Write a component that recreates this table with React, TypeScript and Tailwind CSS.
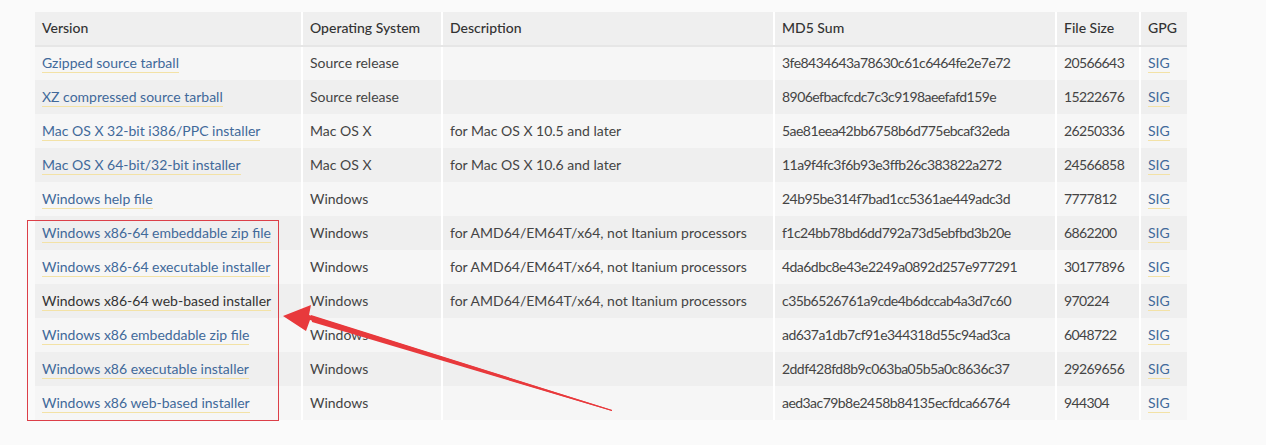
const rows = [
  { v: 'Gzipped source tarball', os: 'Source release', d: '', md5: '3fe8434643a78630c61c6464fe2e7e72', size: '20566643' },
  { v: 'XZ compressed source tarball', os: 'Source release', d: '', md5: '8906efbacfcdc7c3c9198aeefafd159e', size: '15222676' },
  { v: 'Mac OS X 32-bit i386/PPC installer', os: 'Mac OS X', d: 'for Mac OS X 10.5 and later', md5: '5ae81eea42bb6758b6d775ebcaf32eda', size: '26250336' },
  { v: 'Mac OS X 64-bit/32-bit installer', os: 'Mac OS X', d: 'for Mac OS X 10.6 and later', md5: '11a9f4fc3f6b93e3ffb26c383822a272', size: '24566858' },
  { v: 'Windows help file', os: 'Windows', d: '', md5: '24b95be314f7bad1cc5361ae449adc3d', size: '7777812' },
  { v: 'Windows x86-64 embeddable zip file', os: 'Windows', d: 'for AMD64/EM64T/x64, not Itanium processors', md5: 'f1c24bb78bd6dd792a73d5ebfbd3b20e', size: '6862200' },
  { v: 'Windows x86-64 executable installer', os: 'Windows', d: 'for AMD64/EM64T/x64, not Itanium processors', md5: '4da6dbc8e43e2249a0892d257e977291', size: '30177896' },
  { v: 'Windows x86-64 web-based installer', os: 'Windows', d: 'for AMD64/EM64T/x64, not Itanium processors', md5: 'c35b6526761a9cde4b6dccab4a3d7c60', size: '970224', visited: true },
  { v: 'Windows x86 embeddable zip file', os: 'Windows', d: '', md5: 'ad637a1db7cf91e344318d55c94ad3ca', size: '6048722' },
  { v: 'Windows x86 executable installer', os: 'Windows', d: '', md5: '2ddf428fd8b9c063ba05b5a0c8636c37', size: '29269656' },
  { v: 'Windows x86 web-based installer', os: 'Windows', d: '', md5: 'aed3ac79b8e2458b84135ecfdca66764', size: '944304' },
];

function Link({ children, dark }: { children: string; dark?: boolean }) {
  return (
    <a
      href="#"
      className={`border-b border-[#f3e2a6] pb-[1px] ${dark ? 'text-[#333]' : 'text-[#41699a]'}`}
    >
      {children}
    </a>
  );
}

export default function App() {
  const cell = 'h-[34px] px-[7px] pb-[2px] border-l-2 border-white first:border-l-0 whitespace-nowrap';
  return (
    <div className="relative w-[1266px] h-[445px] bg-[#fafafa] overflow-hidden font-['Lato',sans-serif] text-[14px] text-[#444]">
      <div className="pt-[12px] pl-[35px]">
        <table className="border-collapse table-fixed w-[1152px]">
          <colgroup>
            <col className="w-[267px]" />
            <col className="w-[140px]" />
            <col className="w-[332px]" />
            <col className="w-[282px]" />
            <col className="w-[84px]" />
            <col className="w-[47px]" />
          </colgroup>
          <thead>
            <tr className="bg-[#efefef] text-[#333] text-left">
              {['Version', 'Operating System', 'Description', 'MD5 Sum', 'File Size', 'GPG'].map((h) => (
                <th key={h} className={`${cell} h-[32px] border-b-2 border-b-[#e6e6e6] font-medium`}>{h}</th>
              ))}
            </tr>
          </thead>
          <tbody>
            {rows.map((r, i) => (
              <tr key={r.v} className={i % 2 === 0 ? 'bg-[#f6f6f6]' : 'bg-[#efefef]'}>
                <td className={cell}><Link dark={r.visited}>{r.v}</Link></td>
                <td className={cell}>{r.os}</td>
                <td className={cell}>{r.d}</td>
                <td className={`${cell} tracking-[-0.55px]`}>{r.md5}</td>
                <td className={`${cell} tracking-[-0.6px]`}>{r.size}</td>
                <td className={cell}><Link>SIG</Link></td>
              </tr>
            ))}
          </tbody>
        </table>
      </div>

      {/* annotation box */}
      <div className="absolute left-[27px] top-[220px] w-[252px] h-[201px] border border-[#dc3f48]" />

      {/* annotation arrow */}
      <svg className="absolute left-0 top-0" width="1266" height="445" viewBox="0 0 1266 445">
        <polygon
          points="612,411 310,320 306,331 283,316 311,305 309,315 612,410"
          fill="#e8393c"
        />
        <polygon points="612,411 312,322 311,315 612,410" fill="#e8393c" />
      </svg>
    </div>
  );
}
